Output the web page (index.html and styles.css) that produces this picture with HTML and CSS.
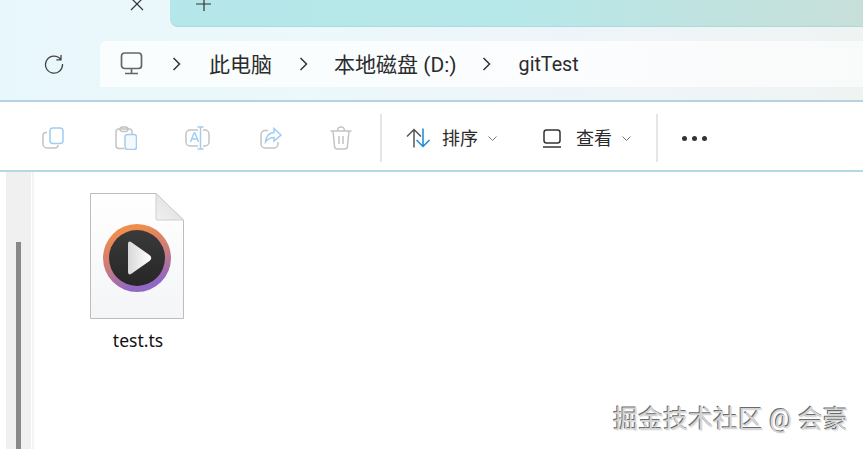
FILE: index.html
```html
<!DOCTYPE html>
<html lang="zh-CN">
<head>
    <meta charset="UTF-8">
    <meta name="viewport" content="width=device-width, initial-scale=1.0">
    <title>gitTest</title>
    <link rel="stylesheet" href="styles.css">
</head>
<body>

<div class="header">
    <div class="tabs">
        <div class="tab-current">
            <svg class="tab-close" width="14" height="14" viewBox="0 0 14 14"><path d="M1 1 13 13M13 1 1 13" stroke="#333" stroke-width="1.2" fill="none"/></svg>
        </div>
        <div class="tab-new">
            <svg class="tab-plus" width="16" height="16" viewBox="0 0 16 16"><path d="M8 0V15M0 8H15" stroke="#333" stroke-width="1.2" fill="none"/></svg>
        </div>
    </div>
    <div class="address">
        <svg class="refresh" width="20" height="20" viewBox="0 0 20 20"><path d="M16.800 5.500A8.500 8.500 0 1 0 18.500 10M17 1V5.800H12.300" stroke="#444" stroke-width="1.300" fill="none"/></svg>
        <div class="crumbs">
            <svg class="pc-icon" width="24" height="23" viewBox="0 0 24 23"><rect x="1.500" y="1" width="20" height="15.500" rx="3" stroke="#666" stroke-width="1.700" fill="none"/><path d="M11.500 16.500V21M5 21.500H18" stroke="#666" stroke-width="1.700" fill="none"/></svg>
            <svg class="sep sep-first" width="9" height="14" viewBox="0 0 9 14"><path d="M1.500 1 7.500 7 1.500 13" stroke="#333" stroke-width="1.500" fill="none"/></svg>
            <span class="crumb">此电脑</span>
            <svg class="sep sep-second" width="9" height="14" viewBox="0 0 9 14"><path d="M1.500 1 7.500 7 1.500 13" stroke="#333" stroke-width="1.500" fill="none"/></svg>
            <span class="crumb">本地磁盘 (D:)</span>
            <svg class="sep sep-third" width="9" height="14" viewBox="0 0 9 14"><path d="M1.500 1 7.500 7 1.500 13" stroke="#333" stroke-width="1.500" fill="none"/></svg>
            <span class="crumb crumb-latin">gitTest</span>
        </div>
    </div>
</div>

<div class="toolbar">
    <svg class="tool tool-copy" width="22" height="22" viewBox="0 0 22 22"><path d="M5 5.500H4A3 3 0 0 0 1 8.500V17A4 4 0 0 0 5 21H13A3 3 0 0 0 16 18" stroke="#c4c4c4" stroke-width="1.500" fill="none"/><rect x="8" y="1" width="13" height="15.500" rx="3" stroke="#a3cdf0" stroke-width="1.500" fill="none"/></svg>
    <svg class="tool tool-paste" width="22" height="24" viewBox="0 0 22 24"><path d="M9 22.500H4A3 3 0 0 1 1 19.500V5.500A2.500 2.500 0 0 1 3.500 3H14A2.500 2.500 0 0 1 17 5.500V8M5 3.500Q5 1 7.500 1H10.500Q13 1 13 3.500Q13 5.500 10.500 5.500H7.500Q5 5.500 5 3.500Z" stroke="#c4c4c4" stroke-width="1.500" fill="none"/><rect x="10" y="8.500" width="11.500" height="15" rx="2.500" stroke="#a3cdf0" stroke-width="1.500" fill="#f4f9fd"/></svg>
    <svg class="tool tool-rename" width="25" height="24" viewBox="0 0 25 24"><path d="M13 4H5A4 4 0 0 0 1 8V16A4 4 0 0 0 5 20H13M18 4H20A4 4 0 0 1 24 8V16A4 4 0 0 1 20 20H18" stroke="#c4c4c4" stroke-width="1.500" fill="none"/><path d="M12.500 1H18.500M15.500 1V23M12.500 23H18.500M5.500 16 9 7H10L13.500 16M6.800 13H12.200" stroke="#a3cdf0" stroke-width="1.500" fill="none"/></svg>
    <svg class="tool tool-share" width="22" height="22" viewBox="0 0 22 22"><path d="M8 3.500H5A4 4 0 0 0 1 7.500V17A4 4 0 0 0 5 21H14A4 4 0 0 0 18 17V15" stroke="#c4c4c4" stroke-width="1.500" fill="none"/><path d="M14 1.500 21 8 14 14V10.500Q9 10.500 5.500 15Q6.500 6 14 5.500Z" stroke="#a3cdf0" stroke-width="1.500" fill="none"/></svg>
    <svg class="tool tool-delete" width="22" height="24" viewBox="0 0 22 24"><path d="M0.500 5H21.500M7.500 5Q7.500 1 11 1Q14.500 1 14.500 5M3 5 4.500 20A3 3 0 0 0 7.500 23H14.500A3 3 0 0 0 17.500 20L19 5M9 10V18M13 10V18" stroke="#c4c4c4" stroke-width="1.500" fill="none"/></svg>
    <div class="divider"></div>
    <svg class="sort-icon" width="25" height="20" viewBox="0 0 25 20"><path d="M8 19.500V1.500M1 8.500 8 1.500 15 8.500" stroke="#555" stroke-width="1.500" fill="none"/><path d="M17 0.500V18.500M10.500 12 17 18.500 23.500 12" stroke="#1e88d2" stroke-width="1.500" fill="none"/></svg>
    <span class="tool-label sort-label">排序</span>
    <svg class="caret" width="9" height="5" viewBox="0 0 9 5"><path d="M0.500 0.500 4.500 4.500 8.500 0.500" stroke="#777" fill="none"/></svg>
    <svg class="view-icon" width="18" height="19" viewBox="0 0 18 19"><rect x="1" y="1" width="16" height="13" rx="2.500" stroke="#333" stroke-width="1.500" fill="none"/><path d="M0 18H18" stroke="#333" stroke-width="1.500"/></svg>
    <span class="tool-label view-label">查看</span>
    <svg class="caret" width="9" height="5" viewBox="0 0 9 5"><path d="M0.500 0.500 4.500 4.500 8.500 0.500" stroke="#777" fill="none"/></svg>
    <div class="divider divider-last"></div>
    <div class="more"><i></i><i></i><i></i></div>
</div>

<div class="main">
    <div class="side">
        <div class="scroll-track"><div class="scroll-thumb"></div></div>
    </div>
    <div class="files">
        <div class="file">
            <svg width="94" height="127" viewBox="0 0 94 127">
                <defs>
                    <linearGradient id="ring" x1="0.300" y1="0" x2="0.600" y2="1">
                        <stop offset="0.100" stop-color="#f08c4c"/>
                        <stop offset="0.550" stop-color="#c87a80"/>
                        <stop offset="0.900" stop-color="#9168c4"/>
                    </linearGradient>
                    <linearGradient id="sheet" x1="0" y1="0" x2="0" y2="1">
                        <stop offset="0" stop-color="#ffffff"/>
                        <stop offset="1" stop-color="#f3f5f7"/>
                    </linearGradient>
                    <linearGradient id="fold" x1="0" y1="1" x2="1" y2="0">
                        <stop offset="0" stop-color="#f0f0f0"/>
                        <stop offset="1" stop-color="#dcdcdc"/>
                    </linearGradient>
                    <linearGradient id="disc" x1="0" y1="0" x2="0" y2="1">
                        <stop offset="0" stop-color="#3a3a3a"/>
                        <stop offset="1" stop-color="#262626"/>
                    </linearGradient>
                    <linearGradient id="play" x1="0" y1="0" x2="1" y2="0">
                        <stop offset="0" stop-color="#d8d8d8"/>
                        <stop offset="1" stop-color="#ffffff"/>
                    </linearGradient>
                </defs>
                <path d="M0.500 0.500H66L93.500 27V125.500H0.500Z" fill="url(#sheet)" stroke="#bdbdbd"/>
                <path d="M66 0.500V26A1 1 0 0 0 67 27H93.500Z" fill="url(#fold)" stroke="#cfcfcf"/>
                <circle cx="47" cy="65" r="34" fill="url(#ring)"/>
                <circle cx="47" cy="65" r="28" fill="url(#disc)"/>
                <path d="M38 51Q38 47.500 41 49L59.500 62Q63 65 59.500 68L41 81Q38 82.500 38 79Z" fill="url(#play)"/>
            </svg>
            <div class="file-name">test.ts</div>
        </div>
    </div>
</div>

<div class="watermark">掘金技术社区 @ 会豪</div>

</body>
</html>
```

FILE: styles.css
```css
html, body {
    margin: 0;
    padding: 0;
}
body {
    width: 863px;
    height: 449px;
    overflow: hidden;
    position: relative;
    background-color: #fff;
    font-family: Roboto, "Noto Sans CJK SC", sans-serif;
    color: #2b2b2b;
}
.header {
    height: 100px;
    border-bottom: 2px solid #b5d4e0;
    background: linear-gradient(90deg, #e8f7fc 0%, #ecf8fb 35%, #eef5fa 65%, #eff3f2 100%);
}
.tabs {
    display: flex;
    height: 27px;
}
.tab-current {
    width: 170px;
    position: relative;
}
.tab-close {
    position: absolute;
    left: 130px;
    top: -3px;
}
.tab-new {
    flex: 1;
    position: relative;
    border-bottom-left-radius: 8px;
    border-bottom: 1px solid #acd9dc;
    background: linear-gradient(90deg, #b5e7ea 0%, #b7e8e9 50%, #c7dfd9 100%);
}
.tab-plus {
    position: absolute;
    left: 26px;
    top: -4px;
}
.address {
    display: flex;
    align-items: center;
    height: 73px;
}
.refresh {
    margin-left: 44px;
    margin-right: 36px;
    flex: none;
}
.crumbs {
    flex: 1;
    height: 46px;
    display: flex;
    align-items: center;
    padding-left: 20px;
    border-top-left-radius: 6px;
    background: linear-gradient(90deg, #f9fdfe 0%, #fbfdfe 60%, #f9fafa 100%);
    font-size: 21px;
}
.pc-icon {
    flex: none;
}
.sep {
    flex: none;
}
.sep-first {
    margin-left: 28px;
    margin-right: 28px;
}
.sep-second {
    margin-left: 27px;
    margin-right: 26px;
}
.sep-third {
    margin-left: 25px;
    margin-right: 28px;
}
.crumb {
    white-space: nowrap;
    line-height: 30px;
    padding-top: 2px;
}
.crumb-latin {
    font-size: 19.700px;
}
.toolbar {
    height: 64px;
    padding-top: 4px;
    display: flex;
    align-items: center;
    border-bottom: 2px solid #b5d9e0;
}
.tool {
    flex: none;
}
.tool-copy {
    margin-left: 42px;
}
.tool-paste {
    margin-left: 51px;
}
.tool-rename {
    margin-left: 48px;
}
.tool-share {
    margin-left: 50px;
}
.tool-delete {
    margin-left: 48px;
}
.divider {
    flex: none;
    width: 2px;
    height: 48px;
    margin-left: 28px;
    background-color: #e4e6e6;
}
.sort-icon {
    flex: none;
    margin-left: 24px;
}
.tool-label {
    font-size: 18px;
    line-height: 24px;
    padding-top: 2px;
    white-space: nowrap;
}
.sort-label {
    margin-left: 11px;
}
.caret {
    flex: none;
    margin-left: 10px;
}
.view-icon {
    flex: none;
    margin-left: 46px;
}
.view-label {
    margin-left: 15px;
}
.divider-last {
    margin-left: 25px;
}
.more {
    display: flex;
    gap: 5px;
    margin-left: 24px;
}
.more i {
    display: block;
    width: 5px;
    height: 5px;
    border-radius: 50%;
    background-color: #333;
}
.main {
    display: flex;
    height: 277px;
}
.side {
    width: 34px;
    flex: none;
    padding-left: 6px;
    box-sizing: border-box;
    border-right: 2px solid #f4f4f4;
}
.scroll-track {
    width: 25px;
    height: 100%;
    padding-top: 70px;
    padding-left: 10px;
    box-sizing: border-box;
    background-color: #f0f0f0;
}
.scroll-thumb {
    width: 5px;
    height: 100%;
    background-color: #888;
}
.files {
    flex: 1;
    padding-top: 21px;
    padding-left: 56px;
}
.file {
    width: 94px;
    text-align: center;
}
.file svg {
    display: block;
}
.file-name {
    margin-top: 8px;
    padding-left: 2px;
    font-family: "Noto Sans", sans-serif;
    font-size: 17.500px;
    line-height: 24px;
    color: #111;
}
.watermark {
    position: absolute;
    right: 15px;
    top: 404px;
    font-size: 25px;
    line-height: 32px;
    white-space: nowrap;
    color: #d4d4d4;
    text-shadow: -1px -1px 0 #6a6a6a, 1px 1px 0 #f4f4f4;
}
```
